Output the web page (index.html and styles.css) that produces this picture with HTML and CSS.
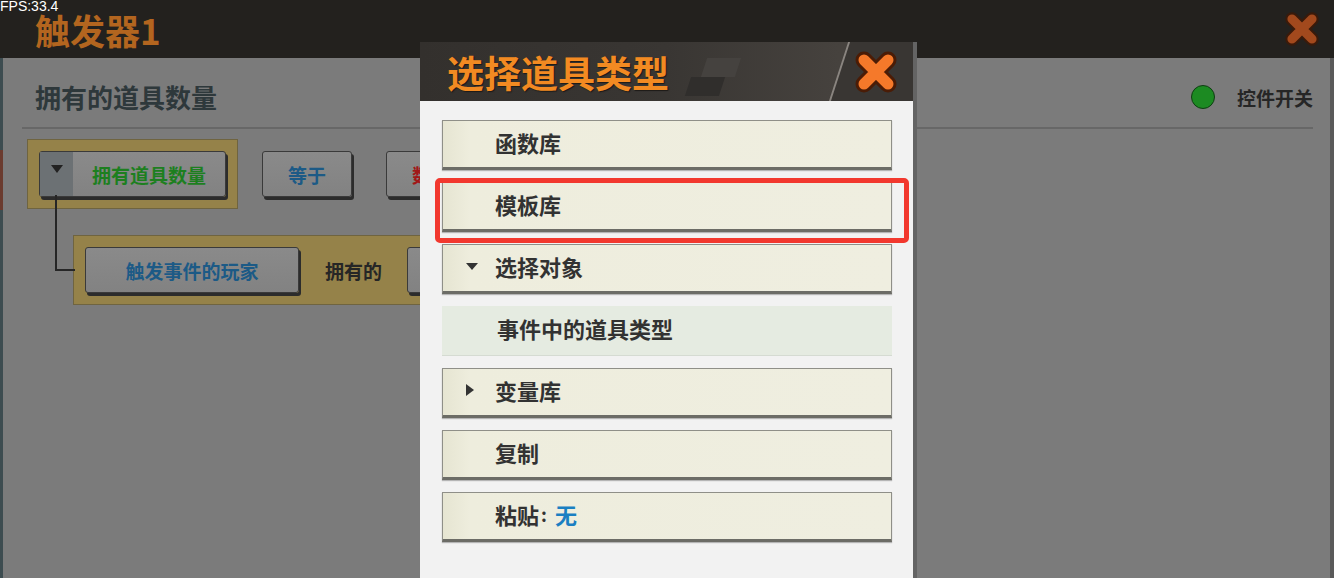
FILE: index.html
```html
<!DOCTYPE html>
<html>
<head>
    <title>触发器1</title>
    <link rel="stylesheet" href="styles.css">
</head>
<body>
    <div class="fps">FPS:33.4</div>

    <div id="screen">
        <div class="topbar">
            <h1 class="topbar-title">触发器1</h1>
            <div class="close-btn close-dim">
                <svg viewBox="0 0 48 48" width="40" height="40">
                    <path d="M12 12 L36 36 M36 12 L12 36" stroke="#3a1a0a" stroke-width="16" stroke-linecap="round"/>
                    <path d="M12 12 L36 36 M36 12 L12 36" stroke="#a2491d" stroke-width="11" stroke-linecap="round"/>
                </svg>
            </div>
        </div>

        <div class="panel">
            <div class="edge-left"></div>
            <div class="panel-body">
                <div class="panel-head">
                    <h2>拥有的道具数量</h2>
                    <div class="toggle"><span class="toggle-dot"></span>控件开关</div>
                </div>

                <div class="rule">
                    <div class="rule-row">
                        <div class="slot">
                            <button class="chip chip-drop"><span class="drop"></span><span class="chip-text green">拥有道具数量</span></button>
                        </div>
                        <button class="chip chip-eq blue">等于</button>
                        <button class="chip chip-num red">数值</button>
                    </div>
                    <div class="rule-row">
                        <div class="slot slot-wide">
                            <button class="chip chip-player blue">触发事件的玩家</button>
                            <span class="label">拥有的</span>
                            <button class="chip chip-item blue">道具</button>
                        </div>
                    </div>
                </div>
            </div>
        </div>
    </div>

    <div id="dialog">
        <div class="dialog-head">
            <h2 class="dialog-title">选择道具类型</h2>
            <span class="deco deco-a"></span>
            <span class="deco deco-b"></span>
            <span class="deco-slash"></span>
            <div class="close-btn">
                <svg viewBox="0 0 48 48" width="48" height="50">
                    <path d="M12 12 L36 36 M36 12 L12 36" stroke="#4a1c06" stroke-width="17" stroke-linecap="round"/>
                    <path d="M12 12 L36 36 M36 12 L12 36" stroke="#f5792a" stroke-width="11" stroke-linecap="round"/>
                </svg>
            </div>
        </div>
        <div class="dialog-body">
            <div class="menu-item">函数库</div>
            <div class="menu-item picked">模板库<span class="highlight"></span></div>
            <div class="menu-item"><span class="tri tri-down"></span>选择对象</div>
            <div class="menu-item sub-item">事件中的道具类型</div>
            <div class="menu-item"><span class="tri tri-right"></span>变量库</div>
            <div class="menu-item">复制</div>
            <div class="menu-item">粘贴<span class="colon">:</span> <span class="none">无</span></div>
        </div>
    </div>
</body>
</html>
```

FILE: styles.css
```css
body {
    margin: 0;
    width: 1334px;
    height: 578px;
    overflow: hidden;
    background: #7b7b7b;
    font-family: "Noto Sans CJK SC", sans-serif;
    position: relative;
}
.fps {
    position: absolute;
    top: 0;
    left: 0;
    z-index: 5;
    font-family: "Liberation Sans", sans-serif;
    font-size: 14px;
    line-height: 13px;
    color: #fff;
}
#screen {
    height: 578px;
    display: flex;
    flex-direction: column;
}
.topbar {
    height: 58px;
    flex: none;
    background: #23211e;
    display: flex;
    align-items: center;
    justify-content: space-between;
    padding: 0 12px 0 35px;
}
.topbar-title {
    margin: 2px 0 0;
    font-size: 35px;
    line-height: 40px;
    font-weight: 700;
    color: #b3651f;
}
.close-btn {
    display: flex;
}
.panel {
    flex: 1;
    display: flex;
    border-right: 4px solid #5a5a5a;
}
.edge-left {
    width: 3px;
    flex: none;
    background: linear-gradient(#3d4c50 0 92px, #6b3b2e 92px 152px, #3d4c50 152px);
}
.panel-body {
    flex: 1;
}
.panel-head {
    height: 71px;
    box-sizing: border-box;
    margin: 0 17px 0 19px;
    padding: 21px 0 0 13px;
    border-bottom: 2px solid #676767;
    display: flex;
    justify-content: space-between;
}
.panel-head h2 {
    margin: 0;
    font-size: 26px;
    line-height: 36px;
    font-weight: 700;
    color: #2e383b;
}
.toggle {
    display: flex;
    align-items: center;
    gap: 22px;
    height: 36px;
    font-size: 19px;
    font-weight: 700;
    color: #262626;
}
.toggle-dot {
    width: 22px;
    height: 22px;
    border-radius: 50%;
    background: #1c8a22;
    border: 1px solid #0f3d12;
}
.rule {
    padding: 10px 0 0 24px;
    display: flex;
    flex-direction: column;
    gap: 26px;
}
.rule-row {
    display: flex;
    align-items: center;
    gap: 24px;
}
.slot {
    width: 211px;
    height: 70px;
    box-sizing: border-box;
    padding: 0 11px;
    background: #958249;
    border: 1px solid #6f6440;
    display: flex;
    align-items: center;
}
.slot-wide {
    width: 600px;
    margin-left: 46px;
    position: relative;
}
.slot-wide::before {
    content: "";
    position: absolute;
    left: -19px;
    top: -41px;
    width: 18px;
    height: 74px;
    border-left: 2px solid #262626;
    border-bottom: 2px solid #262626;
}
.chip {
    height: 46px;
    box-sizing: border-box;
    padding: 0;
    border: 1px solid #3a3a3a;
    border-radius: 3px;
    background: linear-gradient(#8a8a8a, #828282);
    box-shadow: 2px 3px 0 #2c2c2c;
    font-family: inherit;
    font-size: 19px;
    font-weight: 700;
    display: flex;
    align-items: center;
    justify-content: center;
}
.chip-drop {
    width: 188px;
    justify-content: flex-start;
}
.drop {
    width: 33px;
    height: 100%;
    background: #6c7174;
    display: flex;
    align-items: center;
    justify-content: center;
}
.drop::after {
    content: "";
    border-left: 6px solid transparent;
    border-right: 6px solid transparent;
    border-top: 8px solid #222;
    margin-bottom: 10px;
}
.chip-text {
    flex: 1;
    text-align: center;
}
.chip-eq {
    width: 90px;
}
.chip-num {
    width: 90px;
    margin-left: 10px;
}
.chip-player {
    width: 214px;
}
.chip-item {
    width: 120px;
}
.label {
    margin: 0 25px 0 26px;
    font-size: 19px;
    font-weight: 700;
    color: #262626;
}
.green { color: #1d7f1f; }
.blue { color: #1c5a86; }
.red { color: #a11818; }

#dialog {
    position: absolute;
    left: 420px;
    top: 42px;
    bottom: 0;
    width: 493px;
    border-right: 4px solid #646464;
    background: #f2f2f2;
    display: flex;
    flex-direction: column;
}
.dialog-head {
    height: 59px;
    flex: none;
    position: relative;
    overflow: hidden;
    display: flex;
    align-items: center;
    justify-content: space-between;
    padding: 0 13px 0 27px;
    background: linear-gradient(90deg, #33302d 0%, #393633 50%, #46423e 85%);
}
.dialog-title {
    margin: 0;
    font-size: 37px;
    line-height: 44px;
    font-weight: 700;
    color: #f28a22;
    text-shadow: 1px 1px 1px #1d1a17;
    position: relative;
    z-index: 1;
}
.deco {
    position: absolute;
    transform: skewX(-18deg);
}
.deco-a {
    left: 284px;
    top: 16px;
    width: 34px;
    height: 19px;
    background: #45423f;
}
.deco-b {
    left: 268px;
    top: 35px;
    width: 34px;
    height: 19px;
    background: #302e2c;
}
.deco-slash {
    position: absolute;
    left: 418px;
    top: -4px;
    width: 120px;
    height: 70px;
    background: #393633;
    border-left: 2px solid #8a8580;
    transform: skewX(-18deg);
}
.dialog-head .close-btn {
    position: relative;
    z-index: 1;
}
.dialog-body {
    flex: 1;
    padding: 19px 21px 0 22px;
    display: flex;
    flex-direction: column;
    gap: 12px;
}
.menu-item {
    height: 50px;
    box-sizing: border-box;
    position: relative;
    display: flex;
    align-items: center;
    padding: 0 0 5px 52px;
    background: linear-gradient(90deg, #e6e5d2 0%, #eeeddd 6%, #efeee0 100%);
    border: 1px solid #8f8f88;
    border-bottom: 3px solid #6c6c66;
    box-shadow: 0 1px 1px rgba(0, 0, 0, 0.25);
    font-size: 22px;
    line-height: 30px;
    font-weight: 700;
    color: #323232;
}
.sub-item {
    padding-left: 55px;
    background: #e5ebe1;
    border: none;
    border-bottom: 1px solid #d5dbd2;
    box-shadow: none;
}
.highlight {
    position: absolute;
    top: -5px;
    left: -8px;
    right: -18px;
    bottom: -14px;
    border: 5px solid #f2382e;
    border-radius: 5px;
    z-index: 2;
}
.tri {
    position: absolute;
    left: 23px;
    top: 50%;
}
.tri-down {
    margin-top: -5px;
    border-left: 6px solid transparent;
    border-right: 6px solid transparent;
    border-top: 7px solid #333;
}
.tri-right {
    margin-top: -8px;
    border-top: 6px solid transparent;
    border-bottom: 6px solid transparent;
    border-left: 8px solid #333;
}
.colon {
    font-size: 18px;
    margin: 0 2px;
}
.none {
    color: #1a7fc2;
    margin-left: 6px;
}
```
